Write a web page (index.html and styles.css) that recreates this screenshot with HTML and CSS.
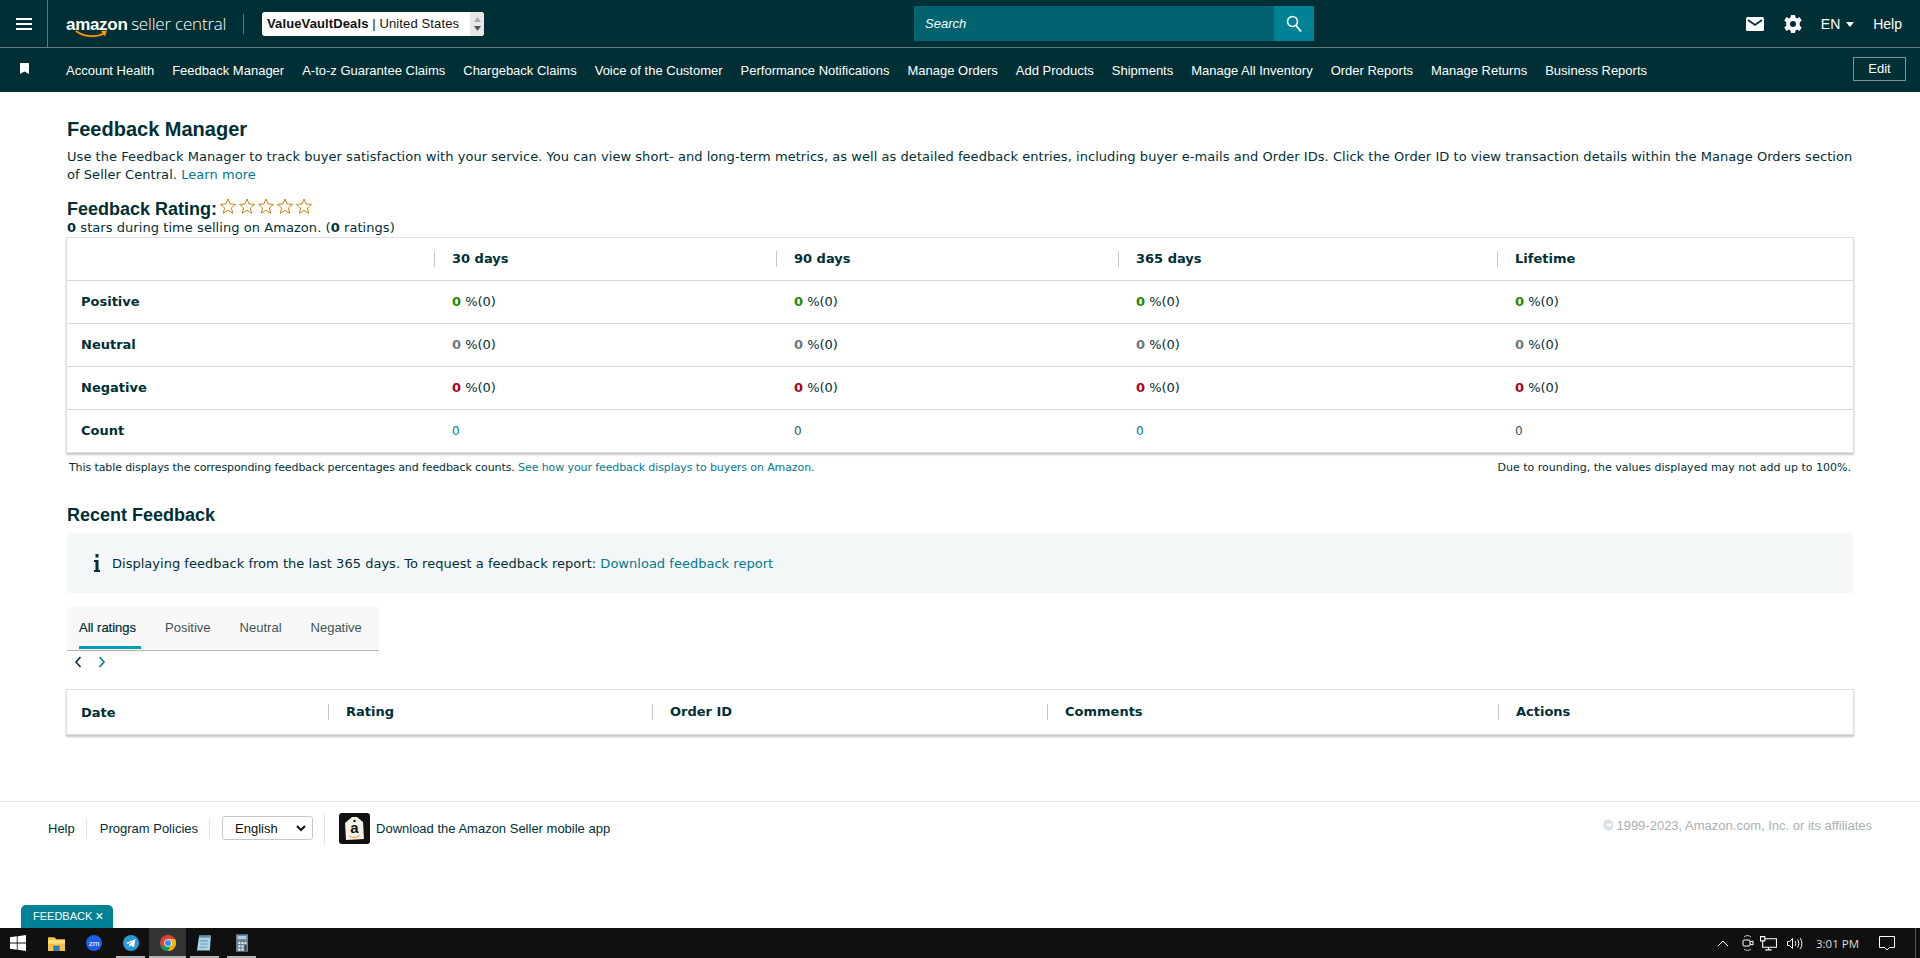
FILE: index.html
```html
<!DOCTYPE html>
<html lang="en">
<head>
    <meta charset="UTF-8">
    <title>Feedback Manager</title>
    <link rel="stylesheet" href="styles.css">
</head>
<body>
    <div class="page">
        <header class="topbar">
            <div class="menu-cell">
                <svg width="16" height="12" viewBox="0 0 16 12"><path d="M0 1h16M0 6h16M0 11h16" stroke="#fff" stroke-width="2"/></svg>
            </div>
            <div class="logo">
                <span class="logo-amazon">amazon</span>
                <span class="logo-rest">seller central</span>
                <svg class="logo-smile" width="34" height="9" viewBox="0 0 34 9"><path d="M1 1c8 6 20 7 29 2" fill="none" stroke="#f90" stroke-width="1.8"/><path d="M26 1l6-.5-2 6z" fill="#f90"/></svg>
            </div>
            <div class="logo-divider"></div>
            <div class="account-picker">
                <span class="account-text"><b>ValueVaultDeals</b> | United States</span>
                <span class="account-arrows">
                    <svg width="9" height="18" viewBox="0 0 9 18"><path d="M4.500 2l3.500 5H1z" fill="#aaa"/><path d="M1 11h7l-3.500 5z" fill="#555"/></svg>
                </span>
            </div>
            <div class="search">
                <span class="search-field">Search</span>
                <span class="search-btn">
                    <svg width="16" height="18" viewBox="0 0 16 18"><circle cx="6.500" cy="6.500" r="5" fill="none" stroke="#fff" stroke-width="1.600"/><path d="M10 10.500l5 6" stroke="#fff" stroke-width="1.800"/></svg>
                </span>
            </div>
            <div class="top-right">
                <svg width="18" height="14" viewBox="0 0 18 14"><rect width="18" height="14" rx="1.500" fill="#fff"/><path d="M2 3l7 5 7-5" fill="none" stroke="#002f36" stroke-width="1.800"/></svg>
                <svg class="gear" width="18" height="18" viewBox="0 0 18 18"><path d="M7 0h4l.5 2.600 1.700.8L15.500 2l2.200 3.500-2 1.800v3.400l2 1.800-2.200 3.500-2.300-1.400-1.700.8L11 18H7l-.5-2.600-1.700-.8L2.500 16 .3 12.500l2-1.800V7.300l-2-1.800L2.500 2l2.300 1.400 1.700-.8z" fill="#fff"/><circle cx="9" cy="9" r="3" fill="#002f36"/></svg>
                <span class="lang">EN <i class="caret"></i></span>
                <span class="help">Help</span>
            </div>
        </header>

        <nav class="navbar">
            <div class="bookmark">
                <svg width="9" height="11" viewBox="0 0 9 11"><path d="M0 0h9v11L4.500 8.500 0 11z" fill="#fff"/></svg>
            </div>
            <a>Account Health</a>
            <a>Feedback Manager</a>
            <a>A-to-z Guarantee Claims</a>
            <a>Chargeback Claims</a>
            <a>Voice of the Customer</a>
            <a>Performance Notifications</a>
            <a>Manage Orders</a>
            <a>Add Products</a>
            <a>Shipments</a>
            <a>Manage All Inventory</a>
            <a>Order Reports</a>
            <a>Manage Returns</a>
            <a>Business Reports</a>
            <button class="edit-btn">Edit</button>
        </nav>

        <main class="content">
            <h1>Feedback Manager</h1>
            <div class="intro">
                <p>Use the Feedback Manager to track buyer satisfaction with your service. You can view short- and long-term metrics, as well as detailed feedback entries, including buyer e-mails and Order IDs. Click the Order ID to view transaction details within the Manage Orders section</p>
                <p>of Seller Central. <a class="link">Learn more</a></p>
            </div>

            <div class="rating-head">
                <h2>Feedback Rating:</h2>
                <svg class="stars" width="92" height="17" viewBox="0 0 92 17">
                    <defs><path id="star" d="M8 1l2.100 5 5.400.4-4.100 3.500 1.300 5.300L8 12.300l-4.700 2.900 1.300-5.300L.5 6.400 5.900 6z" fill="#fff" stroke="#c9860e" stroke-width="1"/></defs>
                    <use href="#star"/><use href="#star" x="19"/><use href="#star" x="38"/><use href="#star" x="57"/><use href="#star" x="76"/>
                </svg>
            </div>
            <p class="rating-sub"><b>0</b> stars during time selling on Amazon. (<b>0</b> ratings)</p>

            <table class="data-table metrics">
                <thead>
                    <tr><th></th><th><span>30 days</span></th><th><span>90 days</span></th><th><span>365 days</span></th><th><span>Lifetime</span></th></tr>
                </thead>
                <tbody>
                    <tr><td class="row-name">Positive</td><td><b class="good">0</b> %(0)</td><td><b class="good">0</b> %(0)</td><td><b class="good">0</b> %(0)</td><td><b class="good">0</b> %(0)</td></tr>
                    <tr><td class="row-name">Neutral</td><td><b class="neutral">0</b> %(0)</td><td><b class="neutral">0</b> %(0)</td><td><b class="neutral">0</b> %(0)</td><td><b class="neutral">0</b> %(0)</td></tr>
                    <tr><td class="row-name">Negative</td><td><b class="bad">0</b> %(0)</td><td><b class="bad">0</b> %(0)</td><td><b class="bad">0</b> %(0)</td><td><b class="bad">0</b> %(0)</td></tr>
                    <tr><td class="row-name">Count</td><td class="count">0</td><td class="count plain">0</td><td class="count">0</td><td class="count plain">0</td></tr>
                </tbody>
            </table>
            <div class="table-note">
                <span class="note-left">This table displays the corresponding feedback percentages and feedback counts. <a class="link">See how your feedback displays to buyers on Amazon.</a></span>
                <span>Due to rounding, the values displayed may not add up to 100%.</span>
            </div>

            <h2 class="recent-title">Recent Feedback</h2>
            <div class="info-box">
                <svg width="6" height="18" viewBox="0 0 6 18"><path d="M1.500 0h3v3.500h-3zM0 6h4.500v10H6v2H0v-2h1.500V8H0z" fill="#002f36"/></svg>
                <span>Displaying feedback from the last 365 days. To request a feedback report: <a class="link">Download feedback report</a></span>
            </div>

            <div class="tabs">
                <a class="tab active">All ratings</a>
                <a class="tab">Positive</a>
                <a class="tab">Neutral</a>
                <a class="tab">Negative</a>
            </div>
            <div class="pager">
                <svg width="8" height="12" viewBox="0 0 8 12"><path d="M6.500 1L2 6l4.500 5" fill="none" stroke="#002f36" stroke-width="1.600"/></svg>
                <svg width="8" height="12" viewBox="0 0 8 12"><path d="M1.500 1L6 6l-4.500 5" fill="none" stroke="#007a8f" stroke-width="1.600"/></svg>
            </div>

            <table class="data-table recent">
                <thead>
                    <tr><th>Date</th><th><span>Rating</span></th><th><span>Order ID</span></th><th><span>Comments</span></th><th><span>Actions</span></th></tr>
                </thead>
            </table>
        </main>

        <footer class="footer">
            <a class="foot-link">Help</a>
            <a class="foot-link">Program Policies</a>
            <div class="foot-select">
                <span>English</span>
                <svg width="10" height="7" viewBox="0 0 10 7"><path d="M1 1l4 4 4-4" fill="none" stroke="#111" stroke-width="2"/></svg>
            </div>
            <div class="foot-app">
                <svg class="app-icon" width="31" height="31" viewBox="0 0 31 31">
                    <rect width="31" height="31" rx="3" fill="#111"/>
                    <path d="M13 4h5l6 5 1 17-18 1-1-17z" fill="#f4f1e8"/>
                    <circle cx="15.500" cy="8" r="1.200" fill="#111"/>
                    <text x="15.500" y="20" text-anchor="middle" class="app-letter">a</text>
                    <path d="M10 23c3 2 7 2 11-.5" fill="none" stroke="#f90" stroke-width="1"/>
                </svg>
                <span>Download the Amazon Seller mobile app</span>
            </div>
            <div class="copyright">© 1999-2023, Amazon.com, Inc. or its affiliates</div>
        </footer>

        <div class="feedback-tab">FEEDBACK <span class="tab-x">×</span></div>

        <div class="taskbar">
            <div class="task-start">
                <svg width="16" height="16" viewBox="0 0 16 16"><path d="M0 2.300l6.800-1v6.300H0zM7.600 1.200L16 0v7.600H7.600zM0 8.400h6.800v6.300l-6.800-1zM7.600 8.400H16V16l-8.400-1.200z" fill="#fff"/></svg>
            </div>
            <div class="task-item">
                <svg width="17" height="15" viewBox="0 0 16 14"><path d="M0 1h6l2 2h8v11H0z" fill="#f6c244"/><path d="M0 4h16v3H0z" fill="#ffdf80"/><path d="M5 9h6v5H5z" fill="#2b7bc4"/></svg>
            </div>
            <div class="task-item">
                <svg width="16" height="16" viewBox="0 0 16 16"><circle cx="8" cy="8" r="8" fill="#1a5fe0"/><text x="8" y="10.500" text-anchor="middle" class="zm-text">zm</text></svg>
            </div>
            <div class="task-item underlined">
                <svg width="16" height="16" viewBox="0 0 16 16"><circle cx="8" cy="8" r="8" fill="#2a9ad6"/><path d="M3 8l9.500-4-1.500 8.500-3-2-1.500 1.500-.5-2.500 4-3.500-5 3z" fill="#fff"/></svg>
            </div>
            <div class="task-item active underlined">
                <svg width="16" height="16" viewBox="0 0 16 16"><circle cx="8" cy="8" r="8" fill="#db4437"/><path d="M8 4h7a8 8 0 0 1-7 12z" fill="#f4b400"/><path d="M1 12a8 8 0 0 0 7 4l3-6-6 0z" fill="#0f9d58"/><circle cx="8" cy="8" r="3.800" fill="#fff"/><circle cx="8" cy="8" r="3" fill="#4285f4"/></svg>
            </div>
            <div class="task-item underlined">
                <svg width="15" height="18" viewBox="0 0 14 16"><path d="M2 1h11l-1 14H0z" fill="#a9d6ea"/><path d="M2 1h11v2H2z" fill="#5f8fa8"/><path d="M3 6h7M3 9h7M2.500 12h7" stroke="#6f9cb3"/></svg>
            </div>
            <div class="task-item underlined">
                <svg width="12" height="18" viewBox="0 0 11 16"><rect width="11" height="16" fill="#6c8090"/><rect x="1.500" y="1.500" width="8" height="3" fill="#a8d0e8"/><path d="M2 7h2v2H2zM5 7h2v2H5zM8 7h1.500v2H8zM2 10h2v2H2zM5 10h2v2H5zM2 13h2v2H2zM5 13h2v2H5z" fill="#e8eef2"/><path d="M8 10h1.500v5H8z" fill="#24405a"/></svg>
            </div>
            <div class="tray">
                <svg class="tray-up" width="12" height="7" viewBox="0 0 12 7"><path d="M1 6l5-5 5 5" fill="none" stroke="#fff" stroke-width="1"/></svg>
                <svg class="tray-cam" width="12" height="16" viewBox="0 0 12 16"><path d="M2 2a5 5 0 0 1 7 0M2 14a5 5 0 0 0 7 0" fill="none" stroke="#ccc"/><rect x="1" y="5" width="7" height="6" rx="1" fill="none" stroke="#fff"/><path d="M8 7l3-1v4l-3-1" fill="none" stroke="#fff"/></svg>
                <svg width="17" height="15" viewBox="0 0 16 14"><path d="M4.500 2.500h11v8h-13V4.500M8 10.500v2.500M5 13h6M.5.500h4v4h-4z" fill="none" stroke="#fff"/></svg>
                <svg width="16" height="13" viewBox="0 0 16 13"><path d="M.5 4.500h2l3-3v10l-3-3h-2zM8 4c1 1 1 4 0 5M10.500 2.500c1.700 2 1.700 6 0 8M13 1c2.500 3 2.500 8 0 11" fill="none" stroke="#fff"/></svg>
                <span class="clock">3:01 PM</span>
                <svg class="notif" width="16" height="15" viewBox="0 0 16 15"><path d="M.5.500h15v11h-5l-2.500 2.500-2.500-2.500h-5z" fill="none" stroke="#fff"/></svg>
                <span class="show-desktop"></span>
            </div>
        </div>
    </div>
</body>
</html>
```

FILE: styles.css
```css
* {
    box-sizing: border-box;
}

body {
    margin: 0;
    font-family: "DejaVu Sans", sans-serif;
    font-size: 13px;
    color: #002f36;
    background-color: #fff;
}

.page {
    position: relative;
    display: flex;
    flex-direction: column;
    height: 958px;
    overflow: hidden;
}

/* top bar */
.topbar {
    display: flex;
    align-items: center;
    height: 48px;
    background-color: #002f36;
    border-bottom: 1px solid #5f7a7f;
    color: #fff;
    font-family: "Liberation Sans", sans-serif;
}

.menu-cell {
    display: flex;
    align-items: center;
    justify-content: center;
    width: 48px;
    height: 47px;
    border-right: 1px solid #5f7a7f;
}

.logo {
    position: relative;
    margin-left: 18px;
    width: 161px;
    white-space: nowrap;
}

.logo-amazon {
    font-family: "Liberation Sans", sans-serif;
    font-weight: bold;
    font-size: 17px;
    letter-spacing: -0.3px;
}

.logo-rest {
    font-family: "Open Sans", sans-serif;
    font-weight: 300;
    font-size: 17px;
    letter-spacing: -0.2px;
}

.logo-smile {
    position: absolute;
    left: 9px;
    top: 18px;
}

.logo-divider {
    width: 1px;
    height: 20px;
    margin: 0 18px 0 16px;
    background-color: #5f7a7f;
}

.account-picker {
    display: flex;
    align-items: center;
    width: 222px;
    height: 24px;
    border-radius: 3px;
    background-color: #fff;
    color: #111;
    font-size: 13px;
    letter-spacing: 0.12px;
    overflow: hidden;
}

.account-text {
    flex: 1;
    padding-left: 5px;
    white-space: nowrap;
}

.account-arrows {
    display: flex;
    justify-content: center;
    align-items: center;
    width: 14px;
    height: 24px;
    background-color: #e8e8e8;
}

.search {
    display: flex;
    width: 400px;
    height: 35px;
    margin-left: 430px;
}

.search-field {
    flex: 1;
    padding-left: 11px;
    line-height: 35px;
    background-color: #00626f;
    font-style: italic;
    font-size: 13px;
}

.search-btn {
    display: flex;
    align-items: center;
    justify-content: center;
    width: 40px;
    background-color: #008296;
}

.top-right {
    display: flex;
    align-items: center;
    margin-left: auto;
    padding-right: 18px;
    font-size: 14px;
}

.gear {
    margin-left: 20px;
}

.lang {
    margin-left: 19px;
}

.caret {
    display: inline-block;
    margin-left: 2px;
    vertical-align: 2px;
    border-top: 5px solid #fff;
    border-left: 4px solid transparent;
    border-right: 4px solid transparent;
}

.help {
    margin-left: 19px;
}

/* nav bar */
.navbar {
    display: flex;
    align-items: center;
    gap: 18px;
    height: 44px;
    padding-right: 14px;
    background-color: #002f36;
    color: #fff;
    font-family: "Liberation Sans", sans-serif;
    font-size: 13px;
}

.bookmark {
    display: flex;
    justify-content: center;
    width: 48px;
    margin-top: -3px;
}

.edit-btn {
    margin-left: auto;
    width: 53px;
    height: 24px;
    border: 1px solid #7f9599;
    background: none;
    color: #fff;
    font-family: "Liberation Sans", sans-serif;
    font-size: 13px;
    margin-top: -3px;
}

/* content */
.content {
    flex: 1;
    padding: 25px 67px 0;
}

h1 {
    margin: 0;
    font-family: "Liberation Sans", sans-serif;
    font-size: 20px;
    line-height: 24px;
}

h2 {
    margin: 0;
    font-family: "Liberation Sans", sans-serif;
    font-size: 18px;
    line-height: 22px;
}

.intro {
    margin-top: 7px;
    line-height: 18px;
    letter-spacing: 0.05px;
    white-space: nowrap;
}

.intro p {
    margin: 0;
}

.link {
    color: #007a8f;
}

.rating-head {
    display: flex;
    align-items: center;
    margin-top: 14px;
}

.stars {
    margin-left: 3px;
    margin-top: -5px;
}

.rating-sub {
    margin: 0 0 3px;
    line-height: 15px;
    letter-spacing: 0.06px;
}

.data-table {
    width: 100%;
    border-collapse: collapse;
    table-layout: fixed;
    background-color: #fff;
    box-shadow: 0 0 0 1px #dcdfdf, 0 2px 2px 1px #c4c8c8;
}

.data-table th {
    height: 42px;
    padding: 0 14px;
    text-align: left;
    font-size: 13px;
}

.data-table th span {
    display: block;
    margin-left: -17px;
    padding-left: 17px;
    border-left: 1px solid #c4c8c8;
    line-height: 16px;
}

.data-table td {
    height: 43px;
    padding: 0 15px;
    border-top: 1px solid #d5d9d9;
}

.data-table .row-name {
    padding-left: 14px;
    font-weight: bold;
}

.metrics th:nth-child(1), .metrics td:nth-child(1) {
    width: 370px;
}

.metrics th:nth-child(2), .metrics td:nth-child(2) {
    width: 342px;
}

.metrics th:nth-child(3), .metrics td:nth-child(3) {
    width: 342px;
}

.metrics th:nth-child(4), .metrics td:nth-child(4) {
    width: 379px;
}

.good {
    color: #1e8900;
}

.neutral {
    color: #6c7778;
}

.bad {
    color: #b0001e;
}

.count {
    font-size: 12px;
    color: #007a8f;
}

.count.plain {
    color: #33585e;
}

.table-note {
    display: flex;
    justify-content: space-between;
    padding: 9px 2px 0;
    font-size: 11px;
    line-height: 14px;
}

.note-left {
    letter-spacing: -0.1px;
}

.recent-title {
    margin-top: 29px;
    line-height: 22px;
}

.info-box {
    display: flex;
    align-items: center;
    gap: 12px;
    height: 60px;
    margin-top: 7px;
    padding-left: 27px;
    background-color: #f4f7f8;
    letter-spacing: 0.02px;
}

.tabs {
    display: flex;
    gap: 29px;
    width: 312px;
    height: 44px;
    margin-top: 14px;
    padding-left: 12px;
    background-color: #f8f8f8;
    border-bottom: 1px solid #b8b8b8;
    font-family: "Liberation Sans", sans-serif;
    font-size: 13px;
    color: #3f5459;
}

.tab {
    padding-top: 13px;
}

.tab.active {
    height: 42px;
    padding-right: 5px;
    margin-right: -5px;
    color: #002f36;
    border-bottom: 3px solid #00a0b4;
    -webkit-text-stroke: 0.2px #002f36;
}

.pager {
    display: flex;
    gap: 16px;
    margin-top: 5px;
    padding-left: 7px;
    height: 12px;
}

.recent {
    margin-top: 22px;
}

.recent th:nth-child(1) {
    width: 264px;
}

.recent th:nth-child(2) {
    width: 324px;
}

.recent th:nth-child(3) {
    width: 395px;
}

.recent th:nth-child(4) {
    width: 451px;
}

.recent th {
    height: 44px;
}

/* footer */
.footer {
    display: flex;
    align-items: center;
    height: 127px;
    padding: 0 48px 74px;
    border-top: 1px solid #e6e6e6;
    font-family: "Liberation Sans", sans-serif;
    font-size: 13px;
    flex-shrink: 0;
}

.foot-link {
    padding: 2px 11px 2px 0;
    margin-right: 13px;
    border-right: 1px solid #e3e3e3;
}

.foot-link + .foot-link {
    margin-right: 12px;
}

.foot-select {
    display: flex;
    align-items: center;
    justify-content: space-between;
    width: 91px;
    height: 24px;
    padding: 0 6px 0 12px;
    border: 1px solid #c4c8c8;
    border-radius: 3px;
    color: #111;
}

.foot-app {
    display: flex;
    align-items: center;
    gap: 6px;
    margin-left: 11px;
    padding-left: 14px;
    border-left: 1px solid #e3e3e3;
}

.app-letter {
    font-family: "Liberation Sans", sans-serif;
    font-weight: bold;
    font-size: 15px;
    fill: #111;
}

.copyright {
    margin-left: auto;
    margin-top: -6px;
    color: #aab0b2;
}

.feedback-tab {
    position: absolute;
    left: 21px;
    bottom: 30px;
    width: 92px;
    height: 23px;
    padding-left: 12px;
    border-radius: 5px 5px 0 0;
    background-color: #008296;
    color: #fff;
    font-family: "Liberation Sans", sans-serif;
    font-size: 11px;
    line-height: 23px;
}

.tab-x {
    font-size: 14px;
    vertical-align: -1px;
}

/* windows taskbar */
.taskbar {
    display: flex;
    align-items: stretch;
    flex-shrink: 0;
    height: 30px;
    background-color: #101010;
}

.task-start {
    display: flex;
    align-items: center;
    justify-content: center;
    width: 36px;
    margin-right: 2px;
}

.task-item {
    position: relative;
    display: flex;
    align-items: center;
    justify-content: center;
    width: 37px;
}

.task-item.active {
    background-color: #333;
}

.task-item.underlined::after {
    content: "";
    position: absolute;
    left: 4px;
    right: 4px;
    bottom: 0;
    height: 2px;
    background-color: #b5b5b5;
}

.task-item.active.underlined::after {
    left: 0;
    right: 0;
}

.tray {
    display: flex;
    align-items: center;
    margin-left: auto;
    gap: 10px;
    font-family: "Open Sans", sans-serif;
    font-size: 11.5px;
    color: #ddd;
}

.tray-up {
    margin-right: 3px;
}

.tray-cam {
    margin-right: -4px;
}

.clock {
    margin: 0 10px 0 3px;
}

.notif {
    margin-right: 10px;
}

.show-desktop {
    width: 1px;
    height: 30px;
    margin-right: 4px;
    background-color: #555;
}

.zm-text {
    font-family: "Liberation Sans", sans-serif;
    font-size: 8px;
    fill: #fff;
}
```
